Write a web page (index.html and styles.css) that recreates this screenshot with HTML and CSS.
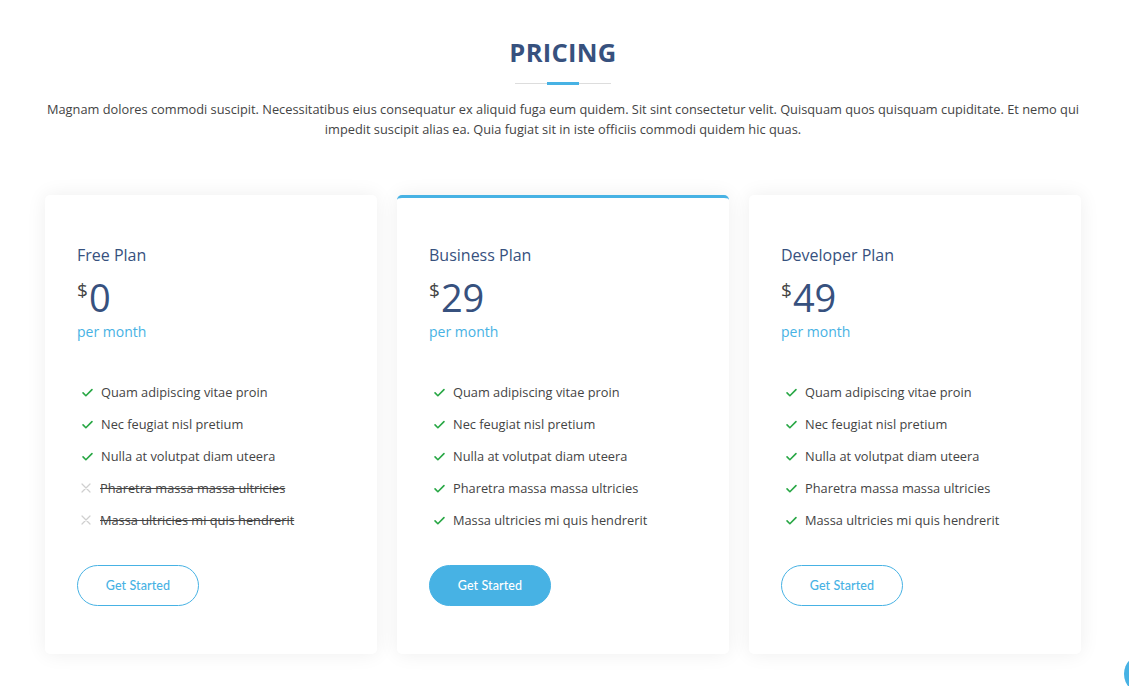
FILE: index.html
```html
<!DOCTYPE html>
<html lang="en">
<head>
<meta charset="utf-8">
<title>Pricing</title>
<link rel="stylesheet" href="styles.css">
</head>
<body>
<section class="pricing">
  <div class="container">
    <div class="section-title">
      <h2>Pricing</h2>
      <p>Magnam dolores commodi suscipit. Necessitatibus eius consequatur ex aliquid fuga eum quidem. Sit sint consectetur velit. Quisquam quos quisquam cupiditate. Et nemo qui impedit suscipit alias ea. Quia fugiat sit in iste officiis commodi quidem hic quas.</p>
    </div>
    <div class="cards">
      <div class="box">
        <h3>Free Plan</h3>
        <div class="price"><sup>$</sup>0</div>
        <div class="per">per month</div>
        <ul>
          <li><svg class="ic" viewBox="0 0 16 16"><path d="M2.5 8.5l3.5 3.5 7.5-7.5"/></svg>Quam adipiscing vitae proin</li>
          <li><svg class="ic" viewBox="0 0 16 16"><path d="M2.5 8.5l3.5 3.5 7.5-7.5"/></svg>Nec feugiat nisl pretium</li>
          <li><svg class="ic" viewBox="0 0 16 16"><path d="M2.5 8.5l3.5 3.5 7.5-7.5"/></svg>Nulla at volutpat diam uteera</li>
          <li class="na"><svg class="ic x" viewBox="0 0 12 12"><path d="M2 2l8 8M10 2l-8 8"/></svg><span>Pharetra massa massa ultricies</span></li>
          <li class="na"><svg class="ic x" viewBox="0 0 12 12"><path d="M2 2l8 8M10 2l-8 8"/></svg><span>Massa ultricies mi quis hendrerit</span></li>
        </ul>
        <a href="#" class="buy">Get Started</a>
      </div>
      <div class="box featured">
        <h3>Business Plan</h3>
        <div class="price"><sup>$</sup>29</div>
        <div class="per">per month</div>
        <ul>
          <li><svg class="ic" viewBox="0 0 16 16"><path d="M2.5 8.5l3.5 3.5 7.5-7.5"/></svg>Quam adipiscing vitae proin</li>
          <li><svg class="ic" viewBox="0 0 16 16"><path d="M2.5 8.5l3.5 3.5 7.5-7.5"/></svg>Nec feugiat nisl pretium</li>
          <li><svg class="ic" viewBox="0 0 16 16"><path d="M2.5 8.5l3.5 3.5 7.5-7.5"/></svg>Nulla at volutpat diam uteera</li>
          <li><svg class="ic" viewBox="0 0 16 16"><path d="M2.5 8.5l3.5 3.5 7.5-7.5"/></svg>Pharetra massa massa ultricies</li>
          <li><svg class="ic" viewBox="0 0 16 16"><path d="M2.5 8.5l3.5 3.5 7.5-7.5"/></svg>Massa ultricies mi quis hendrerit</li>
        </ul>
        <a href="#" class="buy">Get Started</a>
      </div>
      <div class="box">
        <h3>Developer Plan</h3>
        <div class="price"><sup>$</sup>49</div>
        <div class="per">per month</div>
        <ul>
          <li><svg class="ic" viewBox="0 0 16 16"><path d="M2.5 8.5l3.5 3.5 7.5-7.5"/></svg>Quam adipiscing vitae proin</li>
          <li><svg class="ic" viewBox="0 0 16 16"><path d="M2.5 8.5l3.5 3.5 7.5-7.5"/></svg>Nec feugiat nisl pretium</li>
          <li><svg class="ic" viewBox="0 0 16 16"><path d="M2.5 8.5l3.5 3.5 7.5-7.5"/></svg>Nulla at volutpat diam uteera</li>
          <li><svg class="ic" viewBox="0 0 16 16"><path d="M2.5 8.5l3.5 3.5 7.5-7.5"/></svg>Pharetra massa massa ultricies</li>
          <li><svg class="ic" viewBox="0 0 16 16"><path d="M2.5 8.5l3.5 3.5 7.5-7.5"/></svg>Massa ultricies mi quis hendrerit</li>
        </ul>
        <a href="#" class="buy">Get Started</a>
      </div>
    </div>
  </div>
</section>
<a href="#" class="back-to-top" aria-label="Back to top"></a>
</body>
</html>
```
FILE: styles.css
```css
* { box-sizing: border-box; }
html, body { margin: 0; padding: 0; background: #fff; overflow: hidden; }
body { font-family: "Open Sans", "Liberation Sans", sans-serif; color: #444; }

.pricing { padding: 34px 0 40px; width: 1126px; }
.container { width: 1036px; margin: 0 auto; }

.section-title { text-align: center; padding-bottom: 56px; }
.section-title h2 {
  margin: 0 0 14px;
  font-size: 25.5px;
  font-weight: 700;
  text-transform: uppercase;
  color: #37517e;
  letter-spacing: 0.3px;
  line-height: 36px;
  padding-bottom: 15px;
  position: relative;
}
.section-title h2::before {
  content: "";
  position: absolute;
  left: calc(50% - 48px);
  bottom: 1px;
  width: 96px;
  height: 1px;
  background: #ddd;
}
.section-title h2::after {
  content: "";
  position: absolute;
  left: calc(50% - 16px);
  bottom: 0;
  width: 32px;
  height: 3px;
  background: #47b2e4;
}
.section-title p {
  margin: 0;
  font-size: 12.8px;
  line-height: 20px;
  color: #444;
}

.cards { display: grid; grid-template-columns: repeat(3, 1fr); gap: 20px; }
.box {
  background: #fff;
  border-radius: 5px;
  box-shadow: 0 0 20px rgba(0, 0, 0, 0.07);
  padding: 48px 32px;
  border-top: 3px solid #fff;
}
.box.featured { border-top-color: #47b2e4; }

.box h3 {
  margin: -3px 0 0;
  font-size: 16px;
  font-weight: 400;
  color: #37517e;
  line-height: 24px;
}
.price {
  margin-top: 12px;
  font-size: 38px;
  line-height: 36px;
  height: 36px;
  color: #37517e;
  font-weight: 400;
}
.price sup {
  font-size: 19px;
  color: #444;
  position: relative;
  top: 0;
  vertical-align: top;
  line-height: 22px;
  margin-right: 1px;
}
.per {
  font-size: 14px;
  color: #47b2e4;
  line-height: 20px;
  margin-top: 7px;
}

.box ul { list-style: none; padding: 0; margin: 34px 0 0; }
.box li {
  display: flex;
  align-items: center;
  height: 32px;
  font-size: 12.8px;
  color: #444;
}
.ic {
  width: 13px;
  height: 13px;
  margin: 0 7px 0 4px;
  flex: none;
  fill: none;
  stroke: #28a745;
  stroke-width: 2;
  stroke-linecap: round;
  stroke-linejoin: round;
}
.ic.x { stroke: #cfcfcf; stroke-width: 1.2; width: 12px; height: 12px; margin: 0 8px 0 3px; }
.box li.na span { text-decoration: line-through; }

.buy {
  display: inline-flex;
  align-items: center;
  justify-content: center;
  margin-top: 29px;
  width: 122px;
  height: 41px;
  border: 1px solid #47b2e4;
  border-radius: 50px;
  color: #47b2e4;
  font-family: "Lato", "Liberation Sans", sans-serif;
  font-size: 12.5px;
  font-weight: 500;
  text-decoration: none;
  letter-spacing: 0.1px;
}
.featured .buy { background: #47b2e4; color: #fff; }

.back-to-top {
  position: fixed;
  left: 1124px;
  top: 654px;
  width: 40px;
  height: 40px;
  border-radius: 50%;
  background: #47b2e4;
}
```
